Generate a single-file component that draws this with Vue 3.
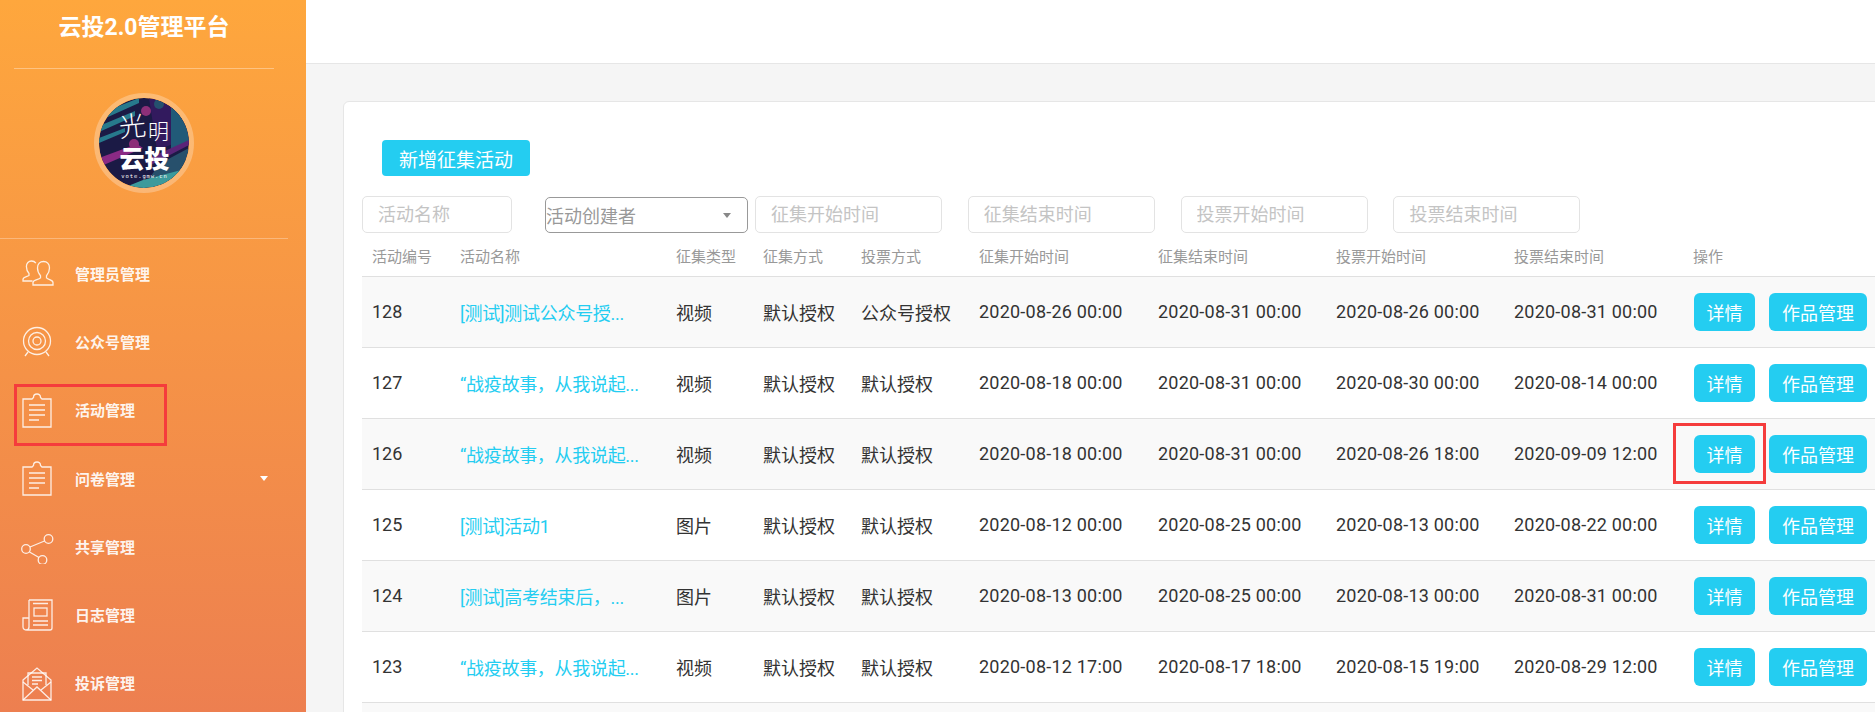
<script setup>
const menu = [
  { key: 'users', label: '管理员管理' },
  { key: 'target', label: '公众号管理' },
  { key: 'clip', label: '活动管理' },
  { key: 'clip', label: '问卷管理', caret: true },
  { key: 'share', label: '共享管理' },
  { key: 'log', label: '日志管理' },
  { key: 'mail', label: '投诉管理' }
]
const filters = ['征集开始时间', '征集结束时间', '投票开始时间', '投票结束时间']
const heads = ['活动编号', '活动名称', '征集类型', '征集方式', '投票方式', '征集开始时间', '征集结束时间', '投票开始时间', '投票结束时间', '操作']
const story = '“战疫故事，从我说起...'
const rows = [
  ['128', '[测试]测试公众号授...', '视频', '默认授权', '公众号授权', '2020-08-26 00:00', '2020-08-31 00:00', '2020-08-26 00:00', '2020-08-31 00:00'],
  ['127', story, '视频', '默认授权', '默认授权', '2020-08-18 00:00', '2020-08-31 00:00', '2020-08-30 00:00', '2020-08-14 00:00'],
  ['126', story, '视频', '默认授权', '默认授权', '2020-08-18 00:00', '2020-08-31 00:00', '2020-08-26 18:00', '2020-09-09 12:00'],
  ['125', '[测试]活动1', '图片', '默认授权', '默认授权', '2020-08-12 00:00', '2020-08-25 00:00', '2020-08-13 00:00', '2020-08-22 00:00'],
  ['124', '[测试]高考结束后，...', '图片', '默认授权', '默认授权', '2020-08-13 00:00', '2020-08-25 00:00', '2020-08-13 00:00', '2020-08-31 00:00'],
  ['123', story, '视频', '默认授权', '默认授权', '2020-08-12 17:00', '2020-08-17 18:00', '2020-08-15 19:00', '2020-08-29 12:00']
]
</script>

<template>
  <div class="page">
    <aside class="side">
      <h1 class="brand">云投2.0管理平台</h1>
      <div class="profile">
        <div class="avatar">
          <svg viewBox="0 0 90 90" width="90" height="90">
            <defs>
              <clipPath id="logoClip"><circle cx="45" cy="45" r="45" /></clipPath>
            </defs>
            <g clip-path="url(#logoClip)">
              <rect width="90" height="90" fill="#1b1a45" />
              <path d="M50 0 H90 V40 L58 52 Z" fill="#321a5e" />
              <path d="M0 16 L40 0 V5 L0 23 Z M0 28 L36 13 V18 L0 34 Z M0 40 L26 30 V34 L0 45 Z" fill="#27798c" />
              <path d="M72 10 L90 8 V44 L72 52 Z" fill="#215a78" />
              <path d="M0 60 L38 46 L44 50 L0 69 Z" fill="#8a2a84" />
              <path d="M46 62 L90 42 V47 L50 68 Z" fill="#5a2478" />
              <circle cx="47" cy="13" r="5" fill="#8c2f78" />
              <circle cx="35" cy="46" r="5" fill="#8c2f78" />
              <circle cx="60" cy="6" r="5" fill="#25506e" />
              <path d="M60 66 L90 50 V90 H44 Z" fill="#27506c" />
              <path d="M24 90 L44 82 L90 70 V90 Z" fill="#3c9a9c" />
              <text class="lg-script" x="20" y="38" transform="rotate(-6 32 28)">光</text>
              <text class="lg-script lg-small" x="49" y="41">明</text>
              <text class="lg-main" x="45.500" y="70">云投</text>
              <text class="lg-url" x="45.500" y="80">vote.gmw.cn</text>
            </g>
          </svg>
        </div>
      </div>
      <ul class="menu">
        <li v-for="m in menu" :key="m.label" class="item">
          <svg class="ico" viewBox="0 0 34 36" width="34" height="36">
            <g v-if="m.key === 'users'">
              <path d="M13 30 v-2.500 c0-2.600 5.500-2.600 7.500-4.600 v-2.200 c-2-2.200-3-5-3-7.700 0-4 2.500-6.500 6-6.500 s6 2.500 6 6.500 c0 2.700-1 5.500-3 7.700 v2.200 c2 2 6.500 2 6.500 4.600 v2.500 z" />
              <path d="M12.500 26 H3 v-1.500 c0-2.500 3.800-2.500 6-4 v-2 c-1.600-1.800-2.600-4.300-2.600-7 0-3.500 2.300-5.500 5.100-5.500 2 0 3.400 .8 4.400 2.200" />
            </g>
            <g v-else-if="m.key === 'target'">
              <circle cx="17" cy="18" r="13.500" />
              <circle cx="17" cy="18" r="8.500" />
              <circle cx="17" cy="18" r="4" />
              <path d="M8 29 L5 33 M26 29 L29 33" />
            </g>
            <g v-else-if="m.key === 'clip'">
              <path d="M12 7 H3 V35 H31 V7 H22 L20.500 5.500 C20.500 3 19 2 17 2 S13.500 3 13.500 5.500 Z" />
              <path d="M9 13 H25 M9 18 H25 M9 23 H25 M9 28 H19" />
            </g>
            <g v-else-if="m.key === 'share'">
              <circle cx="6" cy="21" r="4.300" />
              <circle cx="28.500" cy="11" r="4.300" />
              <circle cx="22.500" cy="32" r="4.300" />
              <path d="M10 19 L24.500 13 M9.500 24 L19 29.500" />
            </g>
            <g v-else-if="m.key === 'log'">
              <path d="M9 3 H32 V31 Q32 33 30 33 H7 Q3 33 3 30 V21 H9 V30 Q9 33 6 33 M9 21 V3" />
              <rect x="14" y="11" width="13" height="8" />
              <path d="M13 6.500 H28 M13 24 H28 M13 28 H28" />
            </g>
            <g v-else>
              <path d="M3 15 L17 3 L31 15 V35 H3 Z" />
              <path d="M3 35 L17 22 L31 35" />
              <path d="M3 17 L13 25 M31 17 L21 25" />
              <path d="M8 20 V8 H26 V20" />
              <path d="M12 12 H22 M12 15.500 H22 M12 19 H18" />
            </g>
          </svg>
          <span class="lbl">{{ m.label }}</span>
          <i v-if="m.caret" class="menu-caret"></i>
        </li>
      </ul>
      <div class="mark mark-menu"></div>
    </aside>

    <main class="main">
      <div class="top"></div>
      <div class="content">
        <section class="card">
          <button class="btn btn-add">新增征集活动</button>
          <div class="filters">
            <input class="inp inp-name" placeholder="活动名称" />
            <div class="sel">
              <span>活动创建者</span>
              <i class="sel-caret"></i>
            </div>
            <input v-for="f in filters" :key="f" class="inp inp-time" :placeholder="f" />
          </div>
          <table class="tbl">
            <colgroup>
              <col class="c1" /><col class="c2" /><col class="c3" /><col class="c4" /><col class="c5" />
              <col class="c6" /><col class="c7" /><col class="c8" /><col class="c9" /><col class="c10" />
            </colgroup>
            <thead>
              <tr><th v-for="h in heads" :key="h">{{ h }}</th></tr>
            </thead>
            <tbody>
              <tr v-for="r in rows" :key="r[0]">
                <td v-for="(c, i) in r" :key="i" :class="{ link: i === 1, date: i > 4 }">{{ c }}</td>
                <td>
                  <div class="ops">
                    <button class="btn btn-sm">详情</button>
                    <button class="btn btn-sm">作品管理</button>
                  </div>
                </td>
              </tr>
              <tr class="rest"><td colspan="10"></td></tr>
            </tbody>
          </table>
        </section>
      </div>
      <div class="mark mark-detail"></div>
    </main>
  </div>
</template>

<style>
html, body { margin: 0; padding: 0; background: #f5f5f5; }
</style>

<style scoped>
.page {
  display: flex;
  width: 1875px;
  height: 712px;
  overflow: hidden;
  background: #f5f5f5;
  font-family: Roboto, "Noto Sans CJK SC", sans-serif;
  color: #333;
}
.side {
  position: relative;
  flex: none;
  width: 306px;
  height: 712px;
  background: linear-gradient(180deg, #fea73d 0%, #ed7f50 100%);
  color: #fff;
}
.brand {
  box-sizing: border-box;
  height: 69px;
  margin: 0 14px 0 14px;
  width: 260px;
  padding-top: 11px;
  font-size: 23px;
  line-height: 34px;
  font-weight: 700;
  text-align: center;
  border-bottom: 1px solid rgba(255, 255, 255, 0.35);
}
.profile {
  box-sizing: border-box;
  height: 170px;
  padding-top: 24px;
  display: flex;
  justify-content: center;
  border-bottom: 1px solid rgba(255, 255, 255, 0.3);
  width: 288px;
}
.avatar {
  width: 90px;
  height: 90px;
  border: 5px solid rgba(255, 255, 255, 0.27);
  border-radius: 50%;
  overflow: hidden;
}
.avatar svg { display: block; }
.lg-script { font-size: 27px; fill: #fff; font-weight: 300; }
.lg-small { font-size: 21px; }
.lg-main { font-size: 25px; fill: #fff; font-weight: 900; text-anchor: middle; }
.lg-url { font-size: 5.500px; fill: #fff; text-anchor: middle; letter-spacing: 0.900px; font-family: "DejaVu Sans Mono", monospace; }
.menu {
  list-style: none;
  margin: 0;
  padding: 0;
}
.item {
  position: relative;
  display: flex;
  align-items: center;
  height: 68.300px;
  padding-left: 20px;
}
.ico {
  flex: none;
  margin-right: 21px;
  fill: none;
  stroke: rgba(255, 255, 255, 0.85);
  stroke-width: 1.300;
}
.lbl {
  font-size: 15px;
  font-weight: 700;
  color: rgba(255, 255, 255, 0.92);
}
.menu-caret {
  position: absolute;
  left: 260px;
  top: 32px;
  width: 0;
  height: 0;
  border-left: 4.500px solid transparent;
  border-right: 4.500px solid transparent;
  border-top: 5px solid #fff;
}
.mark {
  position: absolute;
  box-sizing: border-box;
  border: 3px solid #f53c3c;
}
.mark-menu { left: 14px; top: 384px; width: 153px; height: 62px; }
.mark-detail { left: 1367px; top: 423px; width: 93px; height: 61px; }
.main {
  position: relative;
  flex: 1;
  min-width: 0;
  overflow: hidden;
}
.top {
  box-sizing: border-box;
  height: 64px;
  background: #fff;
  border-bottom: 1px solid #e6e6e6;
}
.content {
  padding: 37px 0 0 37px;
}
.card {
  box-sizing: border-box;
  width: 1640px;
  padding: 38px 0 0 18px;
  background: #fff;
  border: 1px solid #e6e6e6;
  border-radius: 6px;
}
.btn {
  display: block;
  border: 0;
  padding: 0;
  background: #24cdf1;
  color: #fff;
  font-family: Roboto, "Noto Sans CJK SC", sans-serif;
}
.btn-add {
  width: 148px;
  height: 36px;
  margin-left: 20px;
  border-radius: 4px;
  font-size: 19px;
}
.filters {
  display: flex;
  align-items: flex-start;
  margin-top: 20px;
}
.inp {
  box-sizing: border-box;
  height: 37px;
  padding: 0 15px;
  border: 1px solid #e3e3e3;
  border-radius: 5px;
  background: #fff;
  font-family: Roboto, "Noto Sans CJK SC", sans-serif;
  font-size: 18px;
  outline: none;
}
.inp::placeholder { color: #c4c4c4; opacity: 1; }
.inp-name { width: 150px; margin-right: 33px; }
.inp-time { width: 187px; margin-right: 25.800px; }
.sel {
  box-sizing: border-box;
  position: relative;
  display: flex;
  align-items: center;
  width: 203px;
  height: 36px;
  margin: 1px 7px 0 0;
  border: 1px solid #999;
  border-radius: 5px;
  font-size: 18px;
  color: #999;
}
.sel-caret {
  position: absolute;
  right: 16px;
  top: 15px;
  width: 0;
  height: 0;
  border-left: 4.500px solid transparent;
  border-right: 4.500px solid transparent;
  border-top: 5px solid #888;
}
.tbl {
  width: 1521px;
  table-layout: fixed;
  border-collapse: collapse;
}
.c1 { width: 88px; }
.c2 { width: 216px; }
.c3 { width: 87px; }
.c4 { width: 98px; }
.c5 { width: 118px; }
.c6 { width: 179px; }
.c7 { width: 178px; }
.c8 { width: 178px; }
.c9 { width: 179px; }
.c10 { width: 200px; }
th {
  box-sizing: border-box;
  height: 43px;
  padding: 0 10px 8px;
  text-align: left;
  vertical-align: bottom;
  font-size: 15px;
  line-height: 22px;
  font-weight: 400;
  color: #999;
  white-space: nowrap;
  border-bottom: 1px solid #e0e0e0;
}
td {
  box-sizing: border-box;
  height: 71px;
  padding: 0 10px;
  font-size: 18px;
  color: #333;
  white-space: nowrap;
  border-bottom: 1px solid #e0e0e0;
}
tbody tr:nth-child(odd) { background: #f9f9f9; }
.link { color: #24cdf1; letter-spacing: -0.300px; }
.date { letter-spacing: 0.220px; }
.ops { display: flex; align-items: center; gap: 14px; margin-left: 1px; }
.btn-sm {
  height: 38px;
  padding: 0 13px;
  border-radius: 6px;
  font-size: 18px;
  white-space: nowrap;
}
.btn-sm:first-child { padding: 0 12.500px; }
</style>
